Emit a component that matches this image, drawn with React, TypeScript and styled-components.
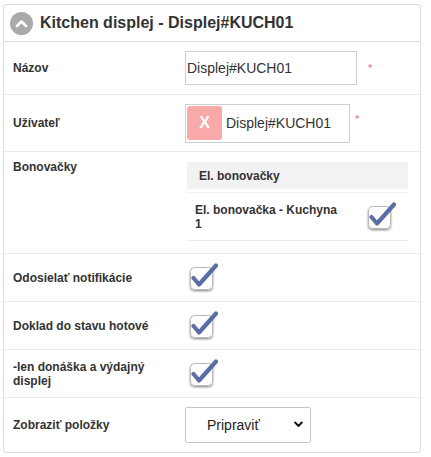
import React, { useId } from "react";
import styled, { createGlobalStyle } from "styled-components";

const GlobalStyle = createGlobalStyle`
  html, body { margin: 0; padding: 0; background: #fff; }
  body { font-family: "Liberation Sans", Arial, sans-serif; color: #333; }
  * { box-sizing: border-box; }
`;

const Page = styled.div`
  padding: 4px 0 0 3px;
`;

const Panel = styled.div`
  width: 418px;
  border: 1px solid #dcdcdc;
  border-radius: 3px;
  background: #fff;
`;

const Header = styled.div`
  height: 37px;
  display: flex;
  align-items: center;
  gap: 7px;
  padding-left: 6px;
  border-bottom: 1px solid #dcdcdc;
`;

const CollapseCircle = styled.div`
  width: 23px;
  height: 23px;
  border-radius: 50%;
  background: #aaaaaa;
  display: flex;
  align-items: center;
  justify-content: center;
`;

const Title = styled.h1`
  margin: 0;
  font-size: 16px;
  font-weight: bold;
  color: #333;
`;

const Row = styled.div<{ $h: number; $top?: boolean; $last?: boolean }>`
  height: ${(p) => p.$h}px;
  display: grid;
  grid-template-columns: 181px 1fr;
  align-items: ${(p) => (p.$top ? "start" : "center")};
  border-bottom: ${(p) => (p.$last ? "none" : "1px solid #ececec")};
`;

const Label = styled.div<{ $pt?: number }>`
  padding-left: 9px;
  padding-top: ${(p) => p.$pt ?? 0}px;
  font-size: 12px;
  font-weight: bold;
  line-height: 14px;
  color: #333;
`;

const Value = styled.div<{ $pt?: number }>`
  display: flex;
  align-items: center;
  padding-top: ${(p) => p.$pt ?? 0}px;
`;

const TextInput = styled.input`
  width: 172px;
  height: 34px;
  border: 1px solid #cfcfcf;
  padding: 0 1px;
  font-family: "Liberation Sans", Arial, sans-serif;
  font-size: 14px;
  color: #333;
  outline: none;
`;

const Required = styled.span<{ $ml: number; $top?: boolean }>`
  margin-left: ${(p) => p.$ml}px;
  align-self: ${(p) => (p.$top ? "flex-start" : "center")};
  margin-top: ${(p) => (p.$top ? 9 : 0)}px;
  color: #e57373;
  font-size: 11px;
  line-height: 12px;
`;

const UserBox = styled.div`
  width: 165px;
  height: 39px;
  border: 1px solid #cfcfcf;
  padding: 1px;
  display: flex;
  align-items: center;
  gap: 4px;
  font-size: 14px;
  color: #333;
`;

const RemoveChip = styled.div`
  width: 35px;
  height: 34px;
  border-radius: 3px;
  background: #f9a9a9;
  color: #fff;
  font-weight: bold;
  font-size: 16px;
  display: flex;
  align-items: center;
  justify-content: center;
`;

const Table = styled.div`
  margin: 10px 0 0 2px;
  width: 221px;
`;

const TableHead = styled.div`
  height: 30px;
  background: #f2f2f2;
  display: flex;
  align-items: center;
  padding-left: 12px;
  font-size: 12px;
  font-weight: bold;
  color: #333;
  border-bottom: 3px solid #fff;
`;

const TableRow = styled.div`
  height: 49px;
  display: grid;
  grid-template-columns: 163px 58px;
  align-items: center;
  border-top: 1px solid #f2f2f2;
  border-bottom: 1px solid #ececec;
`;

const TableText = styled.div`
  padding: 0 8px;
  font-size: 12px;
  font-weight: bold;
  line-height: 14px;
  color: #333;
`;

const TableCheckCell = styled.div`
  display: flex;
  justify-content: center;
  padding-left: 4px;
`;

const CheckWrap = styled.div<{ $ml?: number }>`
  margin-left: ${(p) => p.$ml ?? 0}px;
  width: 30px;
  height: 30px;
`;

const SelectWrap = styled.div`
  position: relative;
  width: 126px;
  height: 36px;
`;

const Select = styled.select`
  appearance: none;
  -webkit-appearance: none;
  width: 100%;
  height: 100%;
  border: 1px solid #c6c6c6;
  border-radius: 2px;
  background: #fff;
  padding-left: 21px;
  font-family: "Liberation Sans", Arial, sans-serif;
  font-size: 14px;
  color: #222;
  outline: none;
`;

const SelectArrow = styled.svg`
  position: absolute;
  right: 8px;
  top: 14px;
  pointer-events: none;
`;

function Check({ ml }: { ml?: number }) {
  const id = useId().replace(/:/g, "");
  return (
    <CheckWrap $ml={ml}>
      <svg width="30" height="30" viewBox="0 0 30 30">
        <defs>
          <filter id={id} x="-30%" y="-30%" width="160%" height="170%">
            <feDropShadow dx="0" dy="1.2" stdDeviation="1" floodColor="#000" floodOpacity="0.45" />
          </filter>
        </defs>
        <rect x="2.5" y="4.5" width="22" height="22" rx="4" fill="#fff" stroke="#b9b9b9" strokeWidth="1" filter={`url(#${id})`} />
        <path d="M5.5 15 L11 21.5 L28 2.5" fill="none" stroke="#5a6ea6" strokeWidth="4.2" strokeLinecap="round" strokeLinejoin="round" />
      </svg>
    </CheckWrap>
  );
}

export default function App() {
  return (
    <>
      <GlobalStyle />
      <Page>
        <Panel>
          <Header>
            <CollapseCircle>
              <svg width="13" height="9" viewBox="0 0 13 9">
                <path d="M2 7 L6.5 2.5 L11 7" fill="none" stroke="#fff" strokeWidth="2.8" strokeLinecap="round" strokeLinejoin="round" />
              </svg>
            </CollapseCircle>
            <Title>Kitchen displej - Displej#KUCH01</Title>
          </Header>

          <Row $h={53}>
            <Label>Názov</Label>
            <Value>
              <TextInput defaultValue="Displej#KUCH01" />
              <Required $ml={11}>*</Required>
            </Value>
          </Row>

          <Row $h={57}>
            <Label>Užívateľ</Label>
            <Value>
              <UserBox>
                <RemoveChip>X</RemoveChip>
                <span>Displej#KUCH01</span>
              </UserBox>
              <Required $ml={5} $top>*</Required>
            </Value>
          </Row>

          <Row $h={102} $top>
            <Label $pt={8}>Bonovačky</Label>
            <Table>
              <TableHead>El. bonovačky</TableHead>
              <TableRow>
                <TableText>El. bonovačka - Kuchyna 1</TableText>
                <TableCheckCell>
                  <Check />
                </TableCheckCell>
              </TableRow>
            </Table>
          </Row>

          <Row $h={48}>
            <Label>Odosielať notifikácie</Label>
            <Value>
              <Check ml={3} />
            </Value>
          </Row>

          <Row $h={48}>
            <Label>Doklad do stavu hotové</Label>
            <Value>
              <Check ml={3} />
            </Value>
          </Row>

          <Row $h={48}>
            <Label>-len donáška a výdajný<br />displej</Label>
            <Value>
              <Check ml={3} />
            </Value>
          </Row>

          <Row $h={54} $last>
            <Label>Zobraziť položky</Label>
            <Value>
              <SelectWrap>
                <Select defaultValue="p">
                  <option value="p">Pripraviť</option>
                </Select>
                <SelectArrow width="9" height="7" viewBox="0 0 9 7">
                  <path d="M1.2 1.5 L4.5 5 L7.8 1.5" fill="none" stroke="#111" strokeWidth="1.9" strokeLinecap="round" strokeLinejoin="round" />
                </SelectArrow>
              </SelectWrap>
            </Value>
          </Row>
        </Panel>
      </Page>
    </>
  );
}
